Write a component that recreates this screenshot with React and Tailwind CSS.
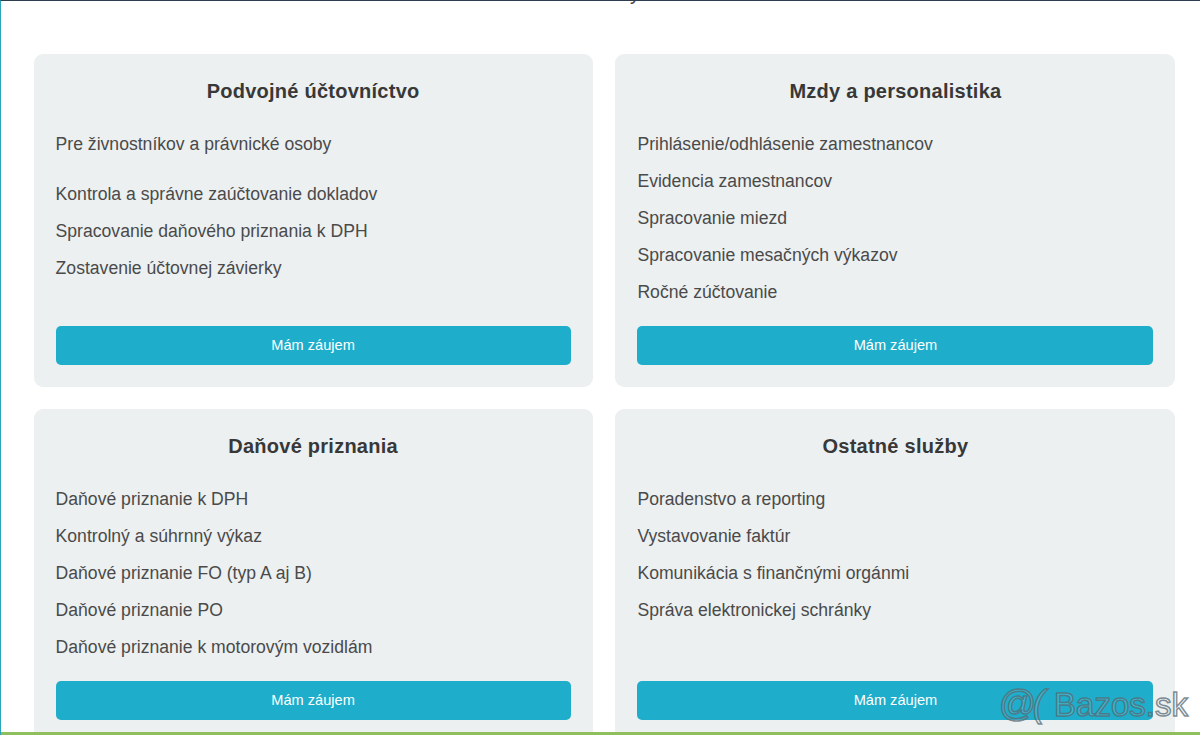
const cards = [
  {
    title: "Podvojné účtovníctvo",
    intro: "Pre živnostníkov a právnické osoby",
    items: [
      "Kontrola a správne zaúčtovanie dokladov",
      "Spracovanie daňového priznania k DPH",
      "Zostavenie účtovnej závierky",
    ],
  },
  {
    title: "Mzdy a personalistika",
    items: [
      "Prihlásenie/odhlásenie zamestnancov",
      "Evidencia zamestnancov",
      "Spracovanie miezd",
      "Spracovanie mesačných výkazov",
      "Ročné zúčtovanie",
    ],
  },
  {
    title: "Daňové priznania",
    items: [
      "Daňové priznanie k DPH",
      "Kontrolný a súhrnný výkaz",
      "Daňové priznanie FO (typ A aj B)",
      "Daňové priznanie PO",
      "Daňové priznanie k motorovým vozidlám",
    ],
  },
  {
    title: "Ostatné služby",
    items: [
      "Poradenstvo a reporting",
      "Vystavovanie faktúr",
      "Komunikácia s finančnými orgánmi",
      "Správa elektronickej schránky",
    ],
  },
];

function Card({ title, intro, items }) {
  return (
    <div className="flex h-[333px] flex-col rounded-[9px] bg-[#ecf0f1] p-[22px]">
      <h3 className="mb-[24.5px] h-[30px] text-center text-[20px] font-bold leading-[30px] tracking-[0.25px] text-[#383838]">
        {title}
      </h3>
      {intro && <p className="mb-[23px] h-[27px] text-[17.6px] leading-[27px] text-[#4a4a4a]">{intro}</p>}
      <ul>
        {items.map((item) => (
          <li key={item} className="mb-[10px] h-[27px] text-[17.6px] leading-[27px] text-[#4a4a4a]">
            {item}
          </li>
        ))}
      </ul>
      <button className="mt-auto h-[39px] shrink-0 rounded-[5px] bg-[#1eaecb] text-[14.6px] text-white">
        Mám záujem
      </button>
    </div>
  );
}

export default function App() {
  return (
    <div className="relative h-[735px] w-[1200px] overflow-hidden border-t border-l border-t-[#2c3e50] border-l-[#2aa6ba] bg-white font-['Liberation_Sans',Arial,sans-serif]">
      <p className="-mt-[18px] h-[20px] pl-[629px] text-[20px] leading-[20px] text-[#444]">y</p>
      <div className="mt-[51px] grid grid-cols-[559px_560px] gap-x-[22.8px] gap-y-[22.4px] pl-[32.6px]">
        {cards.map((card) => (
          <Card key={card.title} {...card} />
        ))}
      </div>
      <div className="absolute inset-x-0 bottom-0 h-[3px] bg-[#8fbe5c]" />
      <div className="absolute bottom-[8px] right-[12px] flex items-baseline text-[33px] leading-[44px] text-white/15 [-webkit-text-stroke:1.5px_rgba(85,105,115,0.75)]">
        <span className="mr-[12px] text-[37px] italic tracking-[-3px]">@(</span>
        <span>Bazos.sk</span>
      </div>
    </div>
  );
}
